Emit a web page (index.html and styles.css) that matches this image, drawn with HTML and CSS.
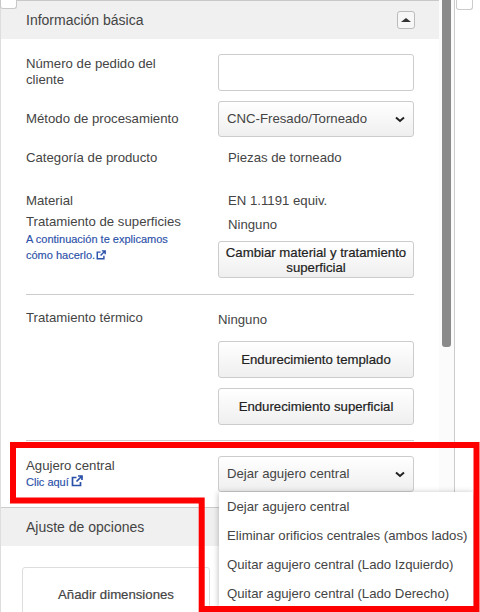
FILE: index.html
```html
<!DOCTYPE html>
<html lang="es">
<head>
    <meta charset="UTF-8">
    <meta name="viewport" content="width=device-width, initial-scale=1.0">
    <title>Información básica</title>
    <link rel="stylesheet" href="styles.css">
</head>
<body>
    <div class="page">
        <div class="panel">
            <div class="tab-corner"></div>
            <div class="panel-head">
                <span>Información básica</span>
                <button class="collapse-btn" type="button"><span class="arrow-up"></span></button>
            </div>
            <div class="panel-body">
                <div class="row row-order">
                    <div class="label">Número de pedido del cliente</div>
                    <div class="input"></div>
                </div>
                <div class="row row-method">
                    <div class="label">Método de procesamiento</div>
                    <div class="select">CNC-Fresado/Torneado
                        <svg class="chevron" viewBox="0 0 10 7"><path d="M1 1.5l4 3.5 4-3.5" fill="none" stroke="#222" stroke-width="2"/></svg>
                    </div>
                </div>
                <div class="row row-category">
                    <div class="label">Categoría de producto</div>
                    <div class="value">Piezas de torneado</div>
                </div>
                <div class="row row-material">
                    <div class="label">Material</div>
                    <div class="value">EN 1.1191 equiv.</div>
                </div>
                <div class="row row-surface">
                    <div>
                        <div class="label">Tratamiento de superficies</div>
                        <a class="help help-long" href="#">A continuación te explicamos cómo hacerlo.<svg class="ext" viewBox="0 0 12 12"><path d="M9.5 7v3.5h-8v-8H5.5M7 1h4v4M11 1L5.5 6.5" fill="none" stroke="#2a50a8" stroke-width="1.7"/></svg></a>
                    </div>
                    <div>
                        <div class="value value-surface">Ninguno</div>
                        <button class="btn btn-tall" type="button">Cambiar material y tratamiento superficial</button>
                    </div>
                </div>
                <hr class="divider divider-first">
                <div class="row row-heat">
                    <div class="label">Tratamiento térmico</div>
                    <div>
                        <div class="value value-flush">Ninguno</div>
                        <button class="btn" type="button">Endurecimiento templado</button>
                        <button class="btn btn-next" type="button">Endurecimiento superficial</button>
                    </div>
                </div>
                <hr class="divider divider-second">
                <div class="row row-hole">
                    <div>
                        <div class="label label-hole">Agujero central</div>
                        <a class="help" href="#">Clic aquí<svg class="ext ext-big" viewBox="0 0 12 12"><path d="M9.5 7v3.5h-8v-8H5.5M7 1h4v4M11 1L5.5 6.5" fill="none" stroke="#2a50a8" stroke-width="1.7"/></svg></a>
                    </div>
                    <div class="select">Dejar agujero central
                        <svg class="chevron" viewBox="0 0 10 7"><path d="M1 1.5l4 3.5 4-3.5" fill="none" stroke="#222" stroke-width="2"/></svg>
                    </div>
                </div>
            </div>
            <div class="panel-head panel-head-options">
                <span>Ajuste de opciones</span>
            </div>
            <div class="options-body">
                <button class="btn-add" type="button">Añadir dimensiones</button>
            </div>
        </div>
        <div class="scroll-track"><div class="scroll-thumb"></div></div>
        <div class="side">
            <div class="side-box"></div>
        </div>
    </div>

    <ul class="menu">
        <li>Dejar agujero central</li>
        <li>Eliminar orificios centrales (ambos lados)</li>
        <li>Quitar agujero central (Lado Izquierdo)</li>
        <li>Quitar agujero central (Lado Derecho)</li>
    </ul>

    <svg class="highlight" viewBox="0 0 480 612" width="480" height="612">
        <path d="M13 445H476.5V609H201.7V500.5H13Z" fill="none" stroke="#ff0000" stroke-width="6"/>
    </svg>
</body>
</html>
```

FILE: styles.css
```css
html, body {
    margin: 0;
    height: 612px;
    overflow: hidden;
    background-color: #fff;
}
body {
    position: relative;
    font-family: "Liberation Sans", Arial, sans-serif;
    font-size: 13.2px;
    color: #444;
}
.page {
    display: flex;
    height: 612px;
    overflow: hidden;
}
.panel {
    position: relative;
    width: 439px;
    flex: none;
    box-sizing: border-box;
    border-top: 1px solid #c8c8c8;
    border-left: 1px solid #ddd;
}
.tab-corner {
    position: absolute;
    left: -1px;
    top: -1px;
    width: 15px;
    height: 8px;
    border: 1px solid #c8c8c8;
    border-top: 0;
    border-radius: 0 0 3px 3px;
    background-color: #fff;
}
.panel-head {
    display: flex;
    align-items: center;
    justify-content: space-between;
    height: 38px;
    padding: 0 25px;
    background-color: #f0f0f0;
    font-size: 14px;
}
.panel-head-options {
    height: 38px;
    border-top: 1px solid #ccc;
}
.collapse-btn {
    width: 18px;
    height: 18px;
    margin-right: -1px;
    padding: 0;
    border: 1px solid #bbb;
    border-radius: 3px;
    background-color: #f7f7f7;
    display: flex;
    align-items: center;
    justify-content: center;
}
.arrow-up {
    border: 4px solid transparent;
    border-top: 0;
    border-bottom: 4px solid #333;
    border-left-width: 5px;
    border-right-width: 5px;
}
.panel-body {
    padding: 15px 25px 0;
}
.row {
    display: grid;
    grid-template-columns: 192px 196px;
    align-items: start;
}
.label {
    line-height: 17px;
}
.row-order .label {
    padding-top: 2px;
    padding-right: 30px;
    line-height: 16px;
}
.label-hole {
    padding-top: 1px;
}
.input {
    height: 35px;
    border: 1px solid #ccc;
    border-radius: 3px;
    background-color: #fff;
}
.select {
    position: relative;
    height: 34px;
    line-height: 34px;
    padding-left: 8px;
    border: 1px solid #ccc;
    border-radius: 3px;
    background-image: linear-gradient(#fff, #efefef);
    color: #444;
}
.chevron {
    position: absolute;
    right: 8px;
    top: 14px;
    width: 10px;
    height: 7px;
}
.row-method {
    margin-top: 10px;
    align-items: center;
}
.row-method .label {
    padding-bottom: 2px;
}
.row-category {
    margin-top: 12px;
}
.row-material {
    margin-top: 26px;
}
.row-surface {
    margin-top: 4px;
}
.value {
    padding-left: 10px;
    line-height: 17px;
}
.value-surface {
    margin-top: 3px;
}
.value-flush {
    padding-left: 0;
    margin-top: 2px;
}
.help {
    display: block;
    margin-top: 0;
    width: 150px;
    font-size: 11px;
    line-height: 16px;
    color: #2a50a8;
    text-decoration: none;
    -webkit-text-stroke: 0.15px #2a50a8;
}
.help-long {
    margin-top: 1px;
}
.ext {
    width: 10px;
    height: 10px;
    margin-left: 1px;
    vertical-align: -1px;
}
.ext-big {
    width: 12px;
    height: 12px;
    margin-left: 2px;
}
.btn {
    display: block;
    width: 196px;
    height: 37px;
    margin-top: 9px;
    padding: 0 4px;
    border: 1px solid #ccc;
    border-radius: 3px;
    background-image: linear-gradient(#fff, #efefef);
    font-family: "Liberation Sans", Arial, sans-serif;
    font-size: 13.2px;
    line-height: 15px;
    color: #222;
    -webkit-text-stroke: 0.2px #222;
}
.btn-tall {
    margin-top: 8px;
}
.row-heat .btn {
    margin-top: 13px;
}
.row-heat .btn-next {
    margin-top: 10px;
}
.divider {
    height: 0;
    margin: 0;
    border: 0;
    border-top: 1px solid #ccc;
}
.divider-first {
    margin-top: 16px;
}
.row-heat {
    margin-top: 14px;
}
.divider-second {
    margin-top: 15px;
}
.row-hole {
    margin-top: 15px;
    height: 51px;
}
.options-body {
    padding: 21px 0 0 21px;
}
.btn-add {
    display: block;
    box-sizing: border-box;
    width: 188px;
    height: 80px;
    padding: 0 0 26px;
    border: 1px solid #ddd;
    border-radius: 3px;
    background-color: #fff;
    font-family: "Liberation Sans", Arial, sans-serif;
    font-size: 13.2px;
    color: #444;
    -webkit-text-stroke: 0.2px #444;
    text-align: center;
}
.scroll-track {
    width: 15px;
    flex: none;
    padding-left: 3px;
    box-sizing: border-box;
    background-color: #fbfbfb;
}
.scroll-thumb {
    width: 9px;
    height: 347px;
    background-color: #8a8a8a;
    border-radius: 0 0 3px 3px;
}
.side {
    flex: 1;
    border-left: 1px solid #ccc;
}
.side-box {
    width: 15px;
    height: 9px;
    margin-left: 1px;
    border: 1px solid #ccc;
    border-top: 0;
    border-radius: 0 0 3px 3px;
}
.menu {
    position: absolute;
    left: 219px;
    top: 492px;
    width: 254px;
    height: 114px;
    margin: 0;
    padding: 0;
    list-style: none;
    background-color: #fff;
    box-shadow: 0 1px 6px rgba(0, 0, 0, 0.3);
}
.menu li {
    height: 29px;
    line-height: 30px;
    padding-left: 8px;
    white-space: nowrap;
}
.highlight {
    position: absolute;
    left: 0;
    top: 0;
    pointer-events: none;
}
```
